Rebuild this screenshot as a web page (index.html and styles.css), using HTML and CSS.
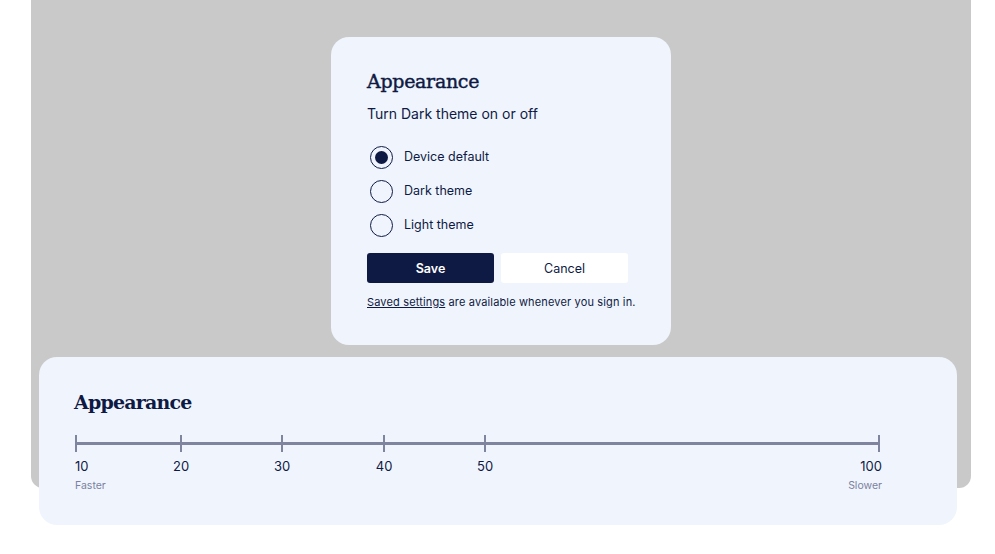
FILE: index.html
```html
<!DOCTYPE html>
<html lang="en">
<head>
    <meta charset="UTF-8">
    <meta name="viewport" content="width=device-width, initial-scale=1.0">
    <title>Appearance</title>
    <link rel="stylesheet" href="styles.css">
</head>
<body>
    <div class="preview">
        <div class="card">
            <h2 class="title">Appearance</h2>
            <p class="subtitle">Turn Dark theme on or off</p>
            <div class="options">
                <label class="option">
                    <input type="radio" name="theme" checked>
                    <span class="ring"></span>
                    Device default
                </label>
                <label class="option">
                    <input type="radio" name="theme">
                    <span class="ring"></span>
                    Dark theme
                </label>
                <label class="option">
                    <input type="radio" name="theme">
                    <span class="ring"></span>
                    Light theme
                </label>
            </div>
            <div class="actions">
                <button class="btn btn-save">Save</button>
                <button class="btn btn-cancel">Cancel</button>
            </div>
            <p class="note"><a href="#">Saved settings</a> are available whenever you sign in.</p>
        </div>
    </div>

    <div class="speed-card">
        <h2 class="title title-bold">Appearance</h2>
        <div class="scale">
            <div class="track">
                <span class="tick" style="left: 0%"></span>
                <span class="tick" style="left: 13.2%"></span>
                <span class="tick" style="left: 25.75%"></span>
                <span class="tick" style="left: 38.45%"></span>
                <span class="tick" style="left: 51%"></span>
                <span class="tick" style="left: 100%"></span>
            </div>
            <div class="labels">
                <span class="num first" style="left: 0%">10</span>
                <span class="num" style="left: 13.2%">20</span>
                <span class="num" style="left: 25.75%">30</span>
                <span class="num" style="left: 38.45%">40</span>
                <span class="num" style="left: 51%">50</span>
                <span class="num last" style="left: 100%">100</span>
            </div>
            <div class="ends">
                <span>Faster</span>
                <span>Slower</span>
            </div>
        </div>
    </div>
</body>
</html>
```

FILE: styles.css
```css
body {
    margin: 0;
    background: #ffffff;
    font-family: "Inter", "Noto Sans", sans-serif;
    color: #0f1a44;
}
.preview {
    width: 940px;
    height: 488px;
    margin-left: 31px;
    padding-top: 37px;
    box-sizing: border-box;
    background: #c9c9c9;
    border-radius: 0 0 12px 12px;
}
.card {
    width: 340px;
    height: 308px;
    margin: 0 auto;
    padding: 30px 36px 0;
    box-sizing: border-box;
    background: #f0f5fd;
    border-radius: 18px;
}
.title {
    margin: 0;
    font-family: "DejaVu Serif", serif;
    font-size: 19px;
    font-weight: normal;
    line-height: 28px;
    letter-spacing: -0.3px;
    -webkit-text-stroke: 0.45px #0f1a44;
}
.title-bold {
    font-weight: bold;
    font-size: 19px;
    letter-spacing: -0.8px;
    -webkit-text-stroke: 0;
}
.subtitle {
    margin: 9px 0 0;
    font-size: 14px;
    line-height: 20px;
}
.options {
    margin-top: 21px;
    display: flex;
    flex-direction: column;
    gap: 10px;
}
.option {
    display: flex;
    align-items: center;
    gap: 11px;
    font-size: 12.5px;
    line-height: 24px;
    cursor: pointer;
}
.option input {
    display: none;
}
.ring {
    width: 21px;
    height: 21px;
    margin-left: 3px;
    border: 1.5px solid #0f1a44;
    border-radius: 50%;
    display: flex;
    align-items: center;
    justify-content: center;
}
.option input:checked + .ring::after {
    content: "";
    width: 13px;
    height: 13px;
    border-radius: 50%;
    background: #0f1a44;
}
.actions {
    margin-top: 16px;
    display: flex;
    gap: 7px;
}
.btn {
    width: 127px;
    height: 30px;
    border: none;
    border-radius: 3px;
    font-family: inherit;
    font-size: 12.5px;
    cursor: pointer;
}
.btn-save {
    background: #0f1a44;
    color: #ffffff;
    font-weight: 600;
}
.btn-cancel {
    background: #ffffff;
    color: #0f1a44;
}
.note {
    margin: 12px 0 0;
    font-size: 11px;
    line-height: 14px;
    letter-spacing: 0.15px;
    white-space: nowrap;
}
.note a {
    color: inherit;
}
.speed-card {
    width: 918px;
    height: 168px;
    margin: -131px 0 0 39px;
    padding: 31px 36px 0 35px;
    box-sizing: border-box;
    position: relative;
    background: #f0f5fd;
    border-radius: 18px;
}
.scale {
    width: 804px;
    margin-top: 19px;
    margin-left: 1px;
}
.track {
    position: relative;
    height: 17px;
}
.track::before {
    content: "";
    position: absolute;
    left: 0;
    right: 0;
    top: 7px;
    height: 2.5px;
    background: #80859f;
}
.tick {
    position: absolute;
    top: 0;
    width: 2px;
    height: 17px;
    margin-left: -1px;
    background: #80859f;
}
.tick:first-child {
    margin-left: 0;
}
.labels {
    position: relative;
    height: 22px;
    margin-top: 5px;
    font-size: 13px;
    line-height: 18px;
}
.num {
    position: absolute;
    top: 0;
    transform: translateX(-50%);
}
.num.first {
    transform: none;
}
.num.last {
    margin-left: 3px;
    transform: translateX(-100%);
}
.ends {
    display: flex;
    justify-content: space-between;
    width: 807px;
    font-size: 10.5px;
    color: #7b81a0;
}
```
